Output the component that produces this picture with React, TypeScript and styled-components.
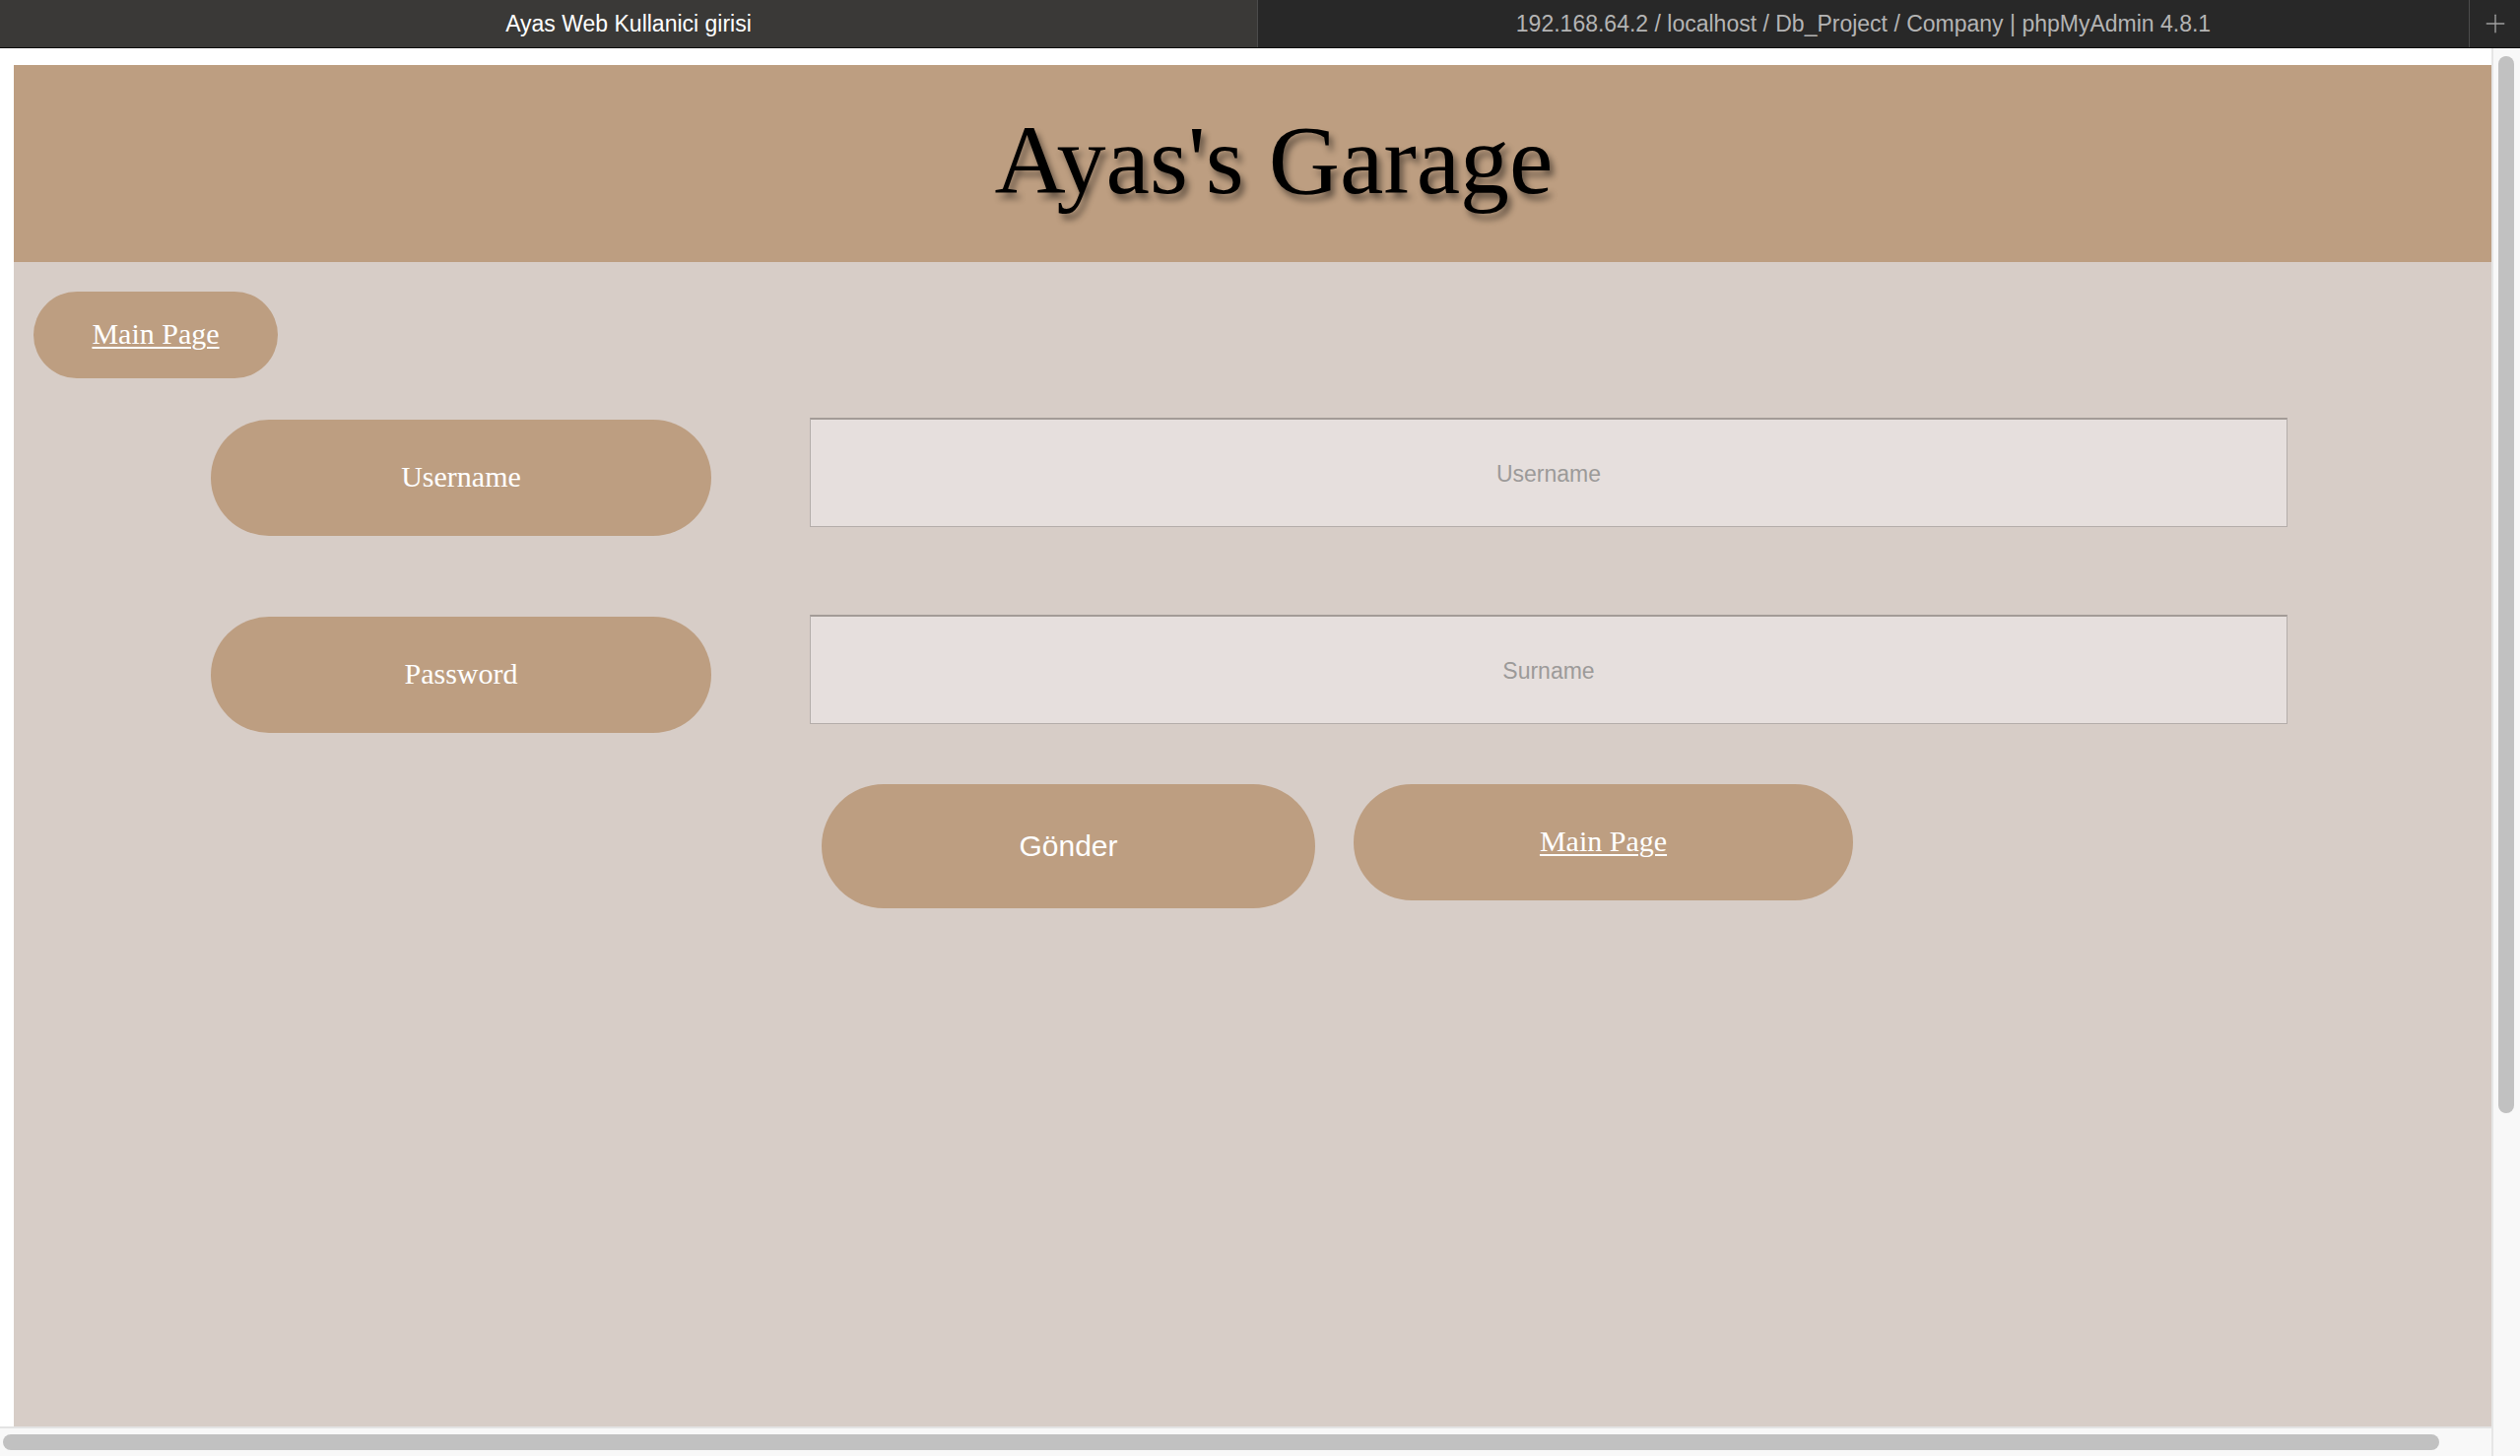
import { Plus } from "lucide-react";
import styled, { createGlobalStyle } from "styled-components";

const TAN = "#bd9e81";

const GlobalStyle = createGlobalStyle`
  html, body {
    margin: 0;
    padding: 0;
    overflow: hidden;
    background: #fff;
  }
  * {
    box-sizing: border-box;
  }
`;

const Window = styled.div`
  width: 2558px;
  height: 1478px;
  display: flex;
  flex-direction: column;
  overflow: hidden;
  background: #fff;
`;

const TabBar = styled.div`
  height: 49px;
  flex-shrink: 0;
  display: flex;
  background: #282828;
  border-bottom: 1px solid #0d0d0d;
`;

const Tab = styled.div<{ $active?: boolean; $width?: number }>`
  ${({ $width }) => ($width ? `width: ${$width}px;` : "flex: 1;")}
  display: flex;
  align-items: center;
  justify-content: center;
  background: ${({ $active }) => ($active ? "#3a3937" : "#282828")};
  color: ${({ $active }) => ($active ? "#ffffff" : "#b4b4b4")};
  font-family: "Liberation Sans", Arial, sans-serif;
  font-size: 23px;
  border-right: 1px solid #4b4b4b;
  white-space: nowrap;
`;

const NewTab = styled.div`
  width: 51px;
  display: flex;
  align-items: center;
  justify-content: center;
  color: #a0a0a0;
`;

const Body = styled.div`
  flex: 1;
  display: flex;
  min-height: 0;
`;

const ViewColumn = styled.div`
  flex: 1;
  display: flex;
  flex-direction: column;
  min-width: 0;
`;

const Viewport = styled.div`
  flex: 1;
  overflow: hidden;
  padding: 17px 0 0 14px;
  display: flex;
  min-height: 0;
`;

const VScroll = styled.div`
  width: 29px;
  flex-shrink: 0;
  background: #f8f8f8;
  border-left: 2px solid #e6e6e6;
  padding: 8px 0 0 5px;
`;

const VThumb = styled.div`
  width: 16px;
  height: 1073px;
  border-radius: 8px;
  background: #c1c1c1;
`;

const HScroll = styled.div`
  height: 30px;
  flex-shrink: 0;
  background: #f8f8f8;
  border-top: 2px solid #e3e3e3;
  padding: 6px 0 0 3px;
`;

const HThumb = styled.div`
  width: 2473px;
  height: 16px;
  border-radius: 8px;
  background: #c1c1c1;
`;

const Page = styled.div`
  width: 2558px;
  flex-shrink: 0;
  background: #d7cdc7;
  font-family: "Liberation Serif", "Times New Roman", serif;
`;

const Header = styled.header`
  height: 200px;
  background: ${TAN};
  display: flex;
  align-items: center;
  justify-content: center;
`;

const Title = styled.h1`
  margin: -6px 0 0;
  font-size: 100px;
  font-weight: 400;
  line-height: 1;
  color: #000;
  text-shadow: 4px 6px 6px rgba(0, 0, 0, 0.45);
`;

const Content = styled.div`
  padding: 30px 0 0 20px;
`;

const Pill = styled.div<{ $width: number; $height: number }>`
  width: ${({ $width }) => $width}px;
  height: ${({ $height }) => $height}px;
  border-radius: ${({ $height }) => $height / 2}px;
  background: ${TAN};
  color: #fff;
  font-size: 30px;
  display: flex;
  align-items: center;
  justify-content: center;
  flex-shrink: 0;
  padding-bottom: 2px;
`;

const LinkPill = styled(Pill).attrs({ as: "a" })`
  text-decoration: underline;
  text-decoration-thickness: 2px;
  text-underline-offset: 3px;
  cursor: pointer;
`;

const FieldLabel = styled(Pill)`
  margin-top: 2px;
`;

const Form = styled.form`
  margin: 40px 0 0 180px;
  display: flex;
  flex-direction: column;
  gap: 80px;
`;

const FieldRow = styled.div`
  display: flex;
  align-items: flex-start;
  gap: 100px;
`;

const TextInput = styled.input`
  width: 1500px;
  height: 111px;
  padding-top: 3px;
  background: #e6dfdd;
  border: 1px solid #b4adaa;
  border-top: 2px solid #a39b97;
  text-align: center;
  font-family: "Liberation Sans", Arial, sans-serif;
  font-size: 23px;
  color: #333;
  outline: none;

  &::placeholder {
    color: #9c9a99;
  }
`;

const Actions = styled.div`
  display: flex;
  align-items: flex-start;
  gap: 39px;
  margin-top: -28px;
  padding-left: 620px;
`;

const SubmitButton = styled.button`
  width: 501px;
  height: 126px;
  border-radius: 63px;
  border: none;
  background: ${TAN};
  color: #fff;
  font-family: "Liberation Sans", Arial, sans-serif;
  font-size: 30px;
  padding: 0;
  cursor: pointer;
`;

export default function App() {
  return (
    <Window>
      <GlobalStyle />
      <TabBar>
        <Tab $active $width={1277}>
          Ayas Web Kullanici girisi
        </Tab>
        <Tab>192.168.64.2 / localhost / Db_Project / Company | phpMyAdmin 4.8.1</Tab>
        <NewTab>
          <Plus size={30} strokeWidth={1.1} />
        </NewTab>
      </TabBar>
      <Body>
        <ViewColumn>
          <Viewport>
            <Page>
              <Header>
                <Title>Ayas's Garage</Title>
              </Header>
              <Content>
                <LinkPill $width={248} $height={88} href="#">
                  Main Page
                </LinkPill>
                <Form onSubmit={(e) => e.preventDefault()}>
                  <FieldRow>
                    <FieldLabel $width={508} $height={118}>
                      Username
                    </FieldLabel>
                    <TextInput type="text" placeholder="Username" />
                  </FieldRow>
                  <FieldRow>
                    <FieldLabel $width={508} $height={118}>
                      Password
                    </FieldLabel>
                    <TextInput type="password" placeholder="Surname" />
                  </FieldRow>
                  <Actions>
                    <SubmitButton type="submit">Gönder</SubmitButton>
                    <LinkPill $width={507} $height={118} href="#">
                      Main Page
                    </LinkPill>
                  </Actions>
                </Form>
              </Content>
            </Page>
          </Viewport>
          <HScroll>
            <HThumb />
          </HScroll>
        </ViewColumn>
        <VScroll>
          <VThumb />
        </VScroll>
      </Body>
    </Window>
  );
}
